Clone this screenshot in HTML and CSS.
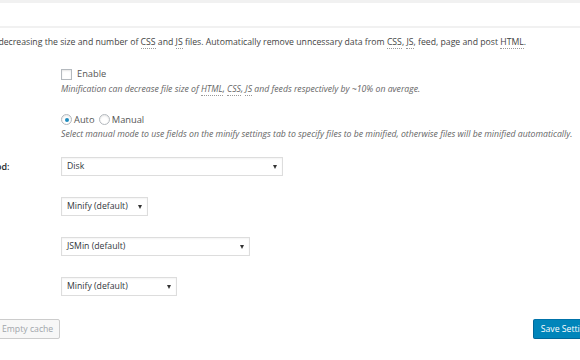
FILE: index.html
```html
<!DOCTYPE html>
<html lang="en">
<head>
  <meta charset="UTF-8">
  <title>Minify</title>
  <link rel="stylesheet" href="styles.css">
</head>
<body>
  <div class="wrap">
    <div class="gap"></div>
    <div class="hndle"></div>

    <p class="intro">Reduce load time by decreasing the size and number of <acronym title="Cascading Style Sheet">CSS</acronym> and <acronym title="JavaScript">JS</acronym> files. Automatically remove unncessary data from <acronym title="Cascading Style Sheet">CSS</acronym>, <acronym title="JavaScript">JS</acronym>, feed, page and post <acronym title="Hypertext Markup Language">HTML</acronym>.</p>

    <div class="form-table">
      <div class="tr row-enable">
        <div class="th hidden">Minify:</div>
        <div class="td">
          <label class="check"><span class="box"></span>Enable</label>
          <p class="description">Minification can decrease file size of <acronym>HTML</acronym>, <acronym>CSS</acronym>, <acronym>JS</acronym> and feeds respectively by ~10% on average.</p>
        </div>
      </div>

      <div class="tr row-mode">
        <div class="th hidden">Minify mode:</div>
        <div class="td">
          <label class="check"><span class="radio on"></span>Auto</label>
          <label class="check"><span class="radio"></span>Manual</label>
          <p class="description">Select manual mode to use fields on the minify settings tab to specify files to be minified, otherwise files will be minified automatically.</p>
        </div>
      </div>

      <div class="tr row-select first">
        <div class="th">Minify cache method:</div>
        <div class="td"><div class="select w-disk">Disk</div></div>
      </div>

      <div class="tr row-select">
        <div class="th">HTML minifier:</div>
        <div class="td"><div class="select w-minify">Minify (default)</div></div>
      </div>

      <div class="tr row-select">
        <div class="th">JS minifier:</div>
        <div class="td"><div class="select w-jsmin">JSMin (default)</div></div>
      </div>

      <div class="tr row-select">
        <div class="th">CSS minifier:</div>
        <div class="td"><div class="select w-css">Minify (default)</div></div>
      </div>
    </div>

    <div class="submit">
      <button class="button" disabled>Empty cache</button>
      <button class="button button-primary">Save Settings</button>
    </div>
  </div>
</body>
</html>
```

FILE: styles.css
```css
html, body { margin: 0; padding: 0; background: #fff; overflow: hidden; }
body { font-family: "Open Sans", "Liberation Sans", sans-serif; font-size: 8.7px; color: #444; width: 580px; height: 360px; }

.wrap { margin-left: -88px; width: 700px; }
.gap { height: 3px; background: #f1f1f1; margin-left: 88px; }
.hndle { height: 23px; border-bottom: 2px solid #f1f1f1; margin-left: 88px; }

acronym { text-decoration: none; border-bottom: 1px dotted #999; }

.intro { margin: 7px 0 0; padding-left: 2px; line-height: 14px; white-space: nowrap; }

.form-table { margin-top: 18px; }
.tr { display: flex; align-items: flex-start; }
.row-mode { margin-top: 18px; }
.row-select { align-items: center; margin-top: 21px; }
.row-select.first { margin-top: 17px; }
.th { width: 149px; flex: none; box-sizing: border-box; padding-left: 4px; font-size: 9px; font-weight: 600; color: #23282d; white-space: nowrap; }
.hidden { visibility: hidden; }

.check { display: inline-flex; align-items: center; color: #555; font-size: 9.3px; line-height: 14px; }
.box { width: 9px; height: 9px; border: 1px solid #b4b9be; margin-right: 5px; box-shadow: inset 0 1px 2px rgba(0,0,0,.1); }
.radio { width: 9px; height: 9px; border: 1px solid #b4b9be; border-radius: 50%; margin-right: 2px; box-shadow: inset 0 1px 2px rgba(0,0,0,.1); position: relative; }
.radio.on::after { content: ""; position: absolute; left: 2.5px; top: 2.5px; width: 4px; height: 4px; border-radius: 50%; background: #1e8cbe; }
.check + .check { margin-left: 2px; }

.description { margin: 0; font-style: italic; color: #666; font-size: 8.7px; line-height: 12px; white-space: nowrap; }

.select { position: relative; box-sizing: border-box; height: 19px; line-height: 17px; padding: 0 5px; border: 1px solid #ddd; box-shadow: inset 0 1px 2px rgba(0,0,0,.05); color: #32373c; }
.select::after { content: ""; position: absolute; right: 5px; top: 7px; border-left: 2.5px solid transparent; border-right: 2.5px solid transparent; border-top: 4px solid #333; }
.w-disk { width: 222px; }
.w-minify { width: 87px; }
.w-jsmin { width: 189px; }
.w-css { width: 116px; }

.submit { display: flex; justify-content: space-between; margin-top: 23px; padding-left: 83px; width: 607px; }
.button { font-family: inherit; font-size: 8.7px; height: 20px; padding: 0 6px; border-radius: 2px; border: 1px solid #ccc; background: #f7f7f7; color: #a0a5aa; }
.button-primary { background: #0085ba; border-color: #0073aa #006799 #006799; color: #fff; padding: 0 7px; }
```
